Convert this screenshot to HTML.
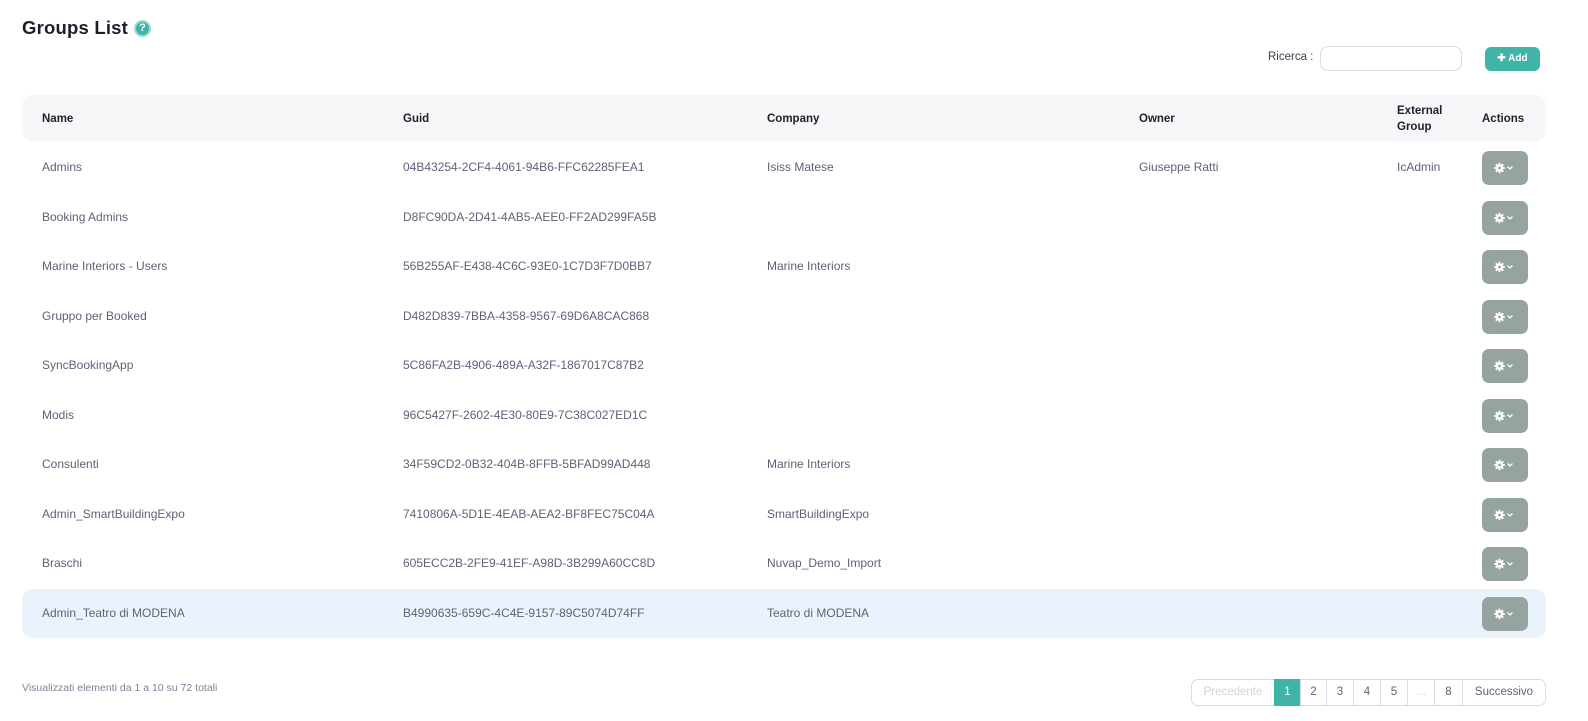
<!DOCTYPE html>
<html><head><meta charset="utf-8"><style>
*{margin:0;padding:0;box-sizing:border-box}
body{width:1588px;height:721px;background:#fff;font-family:"Liberation Sans",sans-serif;position:relative;overflow:hidden;color:#5e6278}
.a{position:absolute;white-space:nowrap}
h1{position:absolute;left:22px;top:17px;font-size:18.5px;font-weight:bold;color:#1e1e2d;letter-spacing:0.2px}
.help{position:absolute;left:134px;top:20px;width:17px;height:17px;border-radius:50%;background:#3fb5a8;border:2px solid #9edbd3;color:#fff;font-size:11px;font-weight:bold;text-align:center;line-height:13px}
.hdr{position:absolute;left:22px;top:95px;width:1524px;height:46px;background:#f5f7f9;border-radius:11px}
.th{position:absolute;font-size:11.5px;font-weight:bold;color:#1e1e2d}
.row{position:absolute;left:22px;width:1524px;height:49px}
.td{position:absolute;font-size:12px;color:#5e6278;top:0;line-height:49px}
.btn{position:absolute;left:1460px;top:8px;width:46px;height:34px;background:#95a3a1;border-radius:7px}
.btn svg{position:absolute;left:12px;top:11px}
.pg{position:absolute;top:679px;height:27px;border:1px solid #d5dde6;font-size:11.5px;color:#5e6278;text-align:center;line-height:25px;background:#fff}
</style></head><body>
<h1>Groups List</h1><div class="help">?</div>
<div class="a" style="left:1268px;top:51px;font-size:11.5px;color:#3f4254">Ricerca :</div>
<div class="a" style="left:1320px;top:46px;width:142px;height:25px;border:1px solid #d5dde6;border-radius:8px"></div>
<div class="a" style="left:1485px;top:47px;width:55px;height:24px;background:#3fb5a8;border-radius:6px;color:#fff;font-size:10px;font-weight:bold;text-align:center;line-height:24px">✚ Add</div>
<div class="hdr">
<div class="th" style="left:20px;top:18px">Name</div>
<div class="th" style="left:381px;top:18px">Guid</div>
<div class="th" style="left:745px;top:18px">Company</div>
<div class="th" style="left:1117px;top:18px">Owner</div>
<div class="th" style="left:1375px;top:8px;line-height:16px">External<br>Group</div>
<div class="th" style="left:1460px;top:18px">Actions</div>
</div>
<div id="rows"></div>
<div class="a" style="left:22px;top:682px;font-size:10.5px;color:#7e8299">Visualizzati elementi da 1 a 10 su 72 totali</div>
<div class="pg" style="left:1191px;width:84px;border-radius:7px 0 0 7px;color:#ccd3dc">Precedente</div>
<div class="pg" style="left:1274px;width:27px;background:#3fb5a8;color:#fff;border-color:#3fb5a8">1</div>
<div class="pg" style="left:1300px;width:27px">2</div>
<div class="pg" style="left:1326px;width:28px">3</div>
<div class="pg" style="left:1353px;width:28px">4</div>
<div class="pg" style="left:1380px;width:28px">5</div>
<div class="pg" style="left:1407px;width:28px;color:#ccd3dc">…</div>
<div class="pg" style="left:1434px;width:29px">8</div>
<div class="pg" style="left:1462px;width:84px;border-radius:0 7px 7px 0">Successivo</div>
<script>
var d=[["Admins","04B43254-2CF4-4061-94B6-FFC62285FEA1","Isiss Matese","Giuseppe Ratti","IcAdmin"],
["Booking Admins","D8FC90DA-2D41-4AB5-AEE0-FF2AD299FA5B","","",""],
["Marine Interiors - Users","56B255AF-E438-4C6C-93E0-1C7D3F7D0BB7","Marine Interiors","",""],
["Gruppo per Booked","D482D839-7BBA-4358-9567-69D6A8CAC868","","",""],
["SyncBookingApp","5C86FA2B-4906-489A-A32F-1867017C87B2","","",""],
["Modis","96C5427F-2602-4E30-80E9-7C38C027ED1C","","",""],
["Consulenti","34F59CD2-0B32-404B-8FFB-5BFAD99AD448","Marine Interiors","",""],
["Admin_SmartBuildingExpo","7410806A-5D1E-4EAB-AEA2-BF8FEC75C04A","SmartBuildingExpo","",""],
["Braschi","605ECC2B-2FE9-41EF-A98D-3B299A60CC8D","Nuvap_Demo_Import","",""],
["Admin_Teatro di MODENA","B4990635-659C-4C4E-9157-89C5074D74FF","Teatro di MODENA","",""]];
var x=[20,381,745,1117,1375],h="";
var gear='<svg width="22" height="12" viewBox="0 0 22 12"><circle cx="5.5" cy="6" r="3.6" fill="#fff"/><g stroke="#fff" stroke-width="2"><line x1="5.5" y1="0.8" x2="5.5" y2="11.2"/><line x1="0.3" y1="6" x2="10.7" y2="6"/><line x1="1.8" y1="2.3" x2="9.2" y2="9.7"/><line x1="9.2" y1="2.3" x2="1.8" y2="9.7"/></g><circle cx="5.5" cy="6" r="1.4" fill="#95a3a1"/><path d="M13.5 4.5 L16 7 L18.5 4.5" stroke="#fff" stroke-width="1.3" fill="none"/></svg>';
d.forEach(function(r,i){var t=143+i*49.5;
h+='<div class="row" style="top:'+t+'px;'+(i==9?'background:#eaf3fb;border-radius:11px;':'')+'">';
r.forEach(function(c,j){if(c)h+='<div class="td" style="left:'+x[j]+'px">'+c+'</div>'});
h+='<div class="btn">'+gear+'</div></div>';});
document.getElementById('rows').innerHTML=h;
</script>
</body></html>
